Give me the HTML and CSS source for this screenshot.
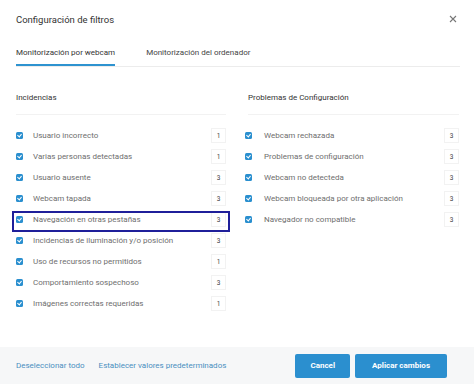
FILE: index.html
```html
<!DOCTYPE html>
<html lang="es">

<head>
    <meta charset="UTF-8">
    <title>Configuración de filtros</title>
    <link rel="stylesheet" href="styles.css">
</head>

<body>

    <div class="modal">
        <header class="modal_header">
            <h1>Configuración de filtros</h1>
            <span class="cerrar">
                <svg width="8" height="8" viewBox="0 0 8 8">
                    <path d="M1 1 L7 7 M7 1 L1 7" stroke="#777" stroke-width="1.1" fill="none" />
                </svg>
            </span>
        </header>

        <nav class="tabs">
            <button class="tab activa">Monitorización por webcam</button>
            <button class="tab">Monitorización del ordenador</button>
        </nav>

        <main class="columnas">
            <section class="columna">
                <h2>Incidencias</h2>
                <ul>
                    <li><span class="check"></span><span class="navn">Usuario incorrecto</span><span class="antal">1</span></li>
                    <li><span class="check"></span><span class="navn">Varias personas detectadas</span><span class="antal">1</span></li>
                    <li><span class="check"></span><span class="navn">Usuario ausente</span><span class="antal">3</span></li>
                    <li><span class="check"></span><span class="navn">Webcam tapada</span><span class="antal">3</span></li>
                    <li class="markeret"><span class="check"></span><span class="navn">Navegación en otras pestañas</span><span class="antal">3</span></li>
                    <li><span class="check"></span><span class="navn">Incidencias de iluminación y/o posición</span><span class="antal">3</span></li>
                    <li><span class="check"></span><span class="navn">Uso de recursos no permitidos</span><span class="antal">1</span></li>
                    <li><span class="check"></span><span class="navn">Comportamiento sospechoso</span><span class="antal">3</span></li>
                    <li><span class="check"></span><span class="navn">Imágenes correctas requeridas</span><span class="antal">1</span></li>
                </ul>
            </section>

            <section class="columna">
                <h2>Problemas de Configuración</h2>
                <ul>
                    <li><span class="check"></span><span class="navn">Webcam rechazada</span><span class="antal">3</span></li>
                    <li><span class="check"></span><span class="navn">Problemas de configuración</span><span class="antal">3</span></li>
                    <li><span class="check"></span><span class="navn">Webcam no detecteda</span><span class="antal">3</span></li>
                    <li><span class="check"></span><span class="navn">Webcam bloqueada por otra aplicación</span><span class="antal">3</span></li>
                    <li><span class="check"></span><span class="navn">Navegador no compatible</span><span class="antal">3</span></li>
                </ul>
            </section>
        </main>

        <footer class="modal_footer">
            <a href="#" class="link">Deseleccionar todo</a>
            <a href="#" class="link">Establecer valores predeterminados</a>
            <span class="spacer"></span>
            <button class="knap">Cancel</button>
            <button class="knap">Aplicar cambios</button>
        </footer>
    </div>

</body>

</html>
```

FILE: styles.css
```css
* {
    box-sizing: border-box;
}

body {
    margin: 0;
    background-color: white;
    font-family: Roboto, "Liberation Sans", sans-serif;
    color: #555;
}

.modal {
    width: 474px;
    height: 384px;
    display: flex;
    flex-direction: column;
}

.modal_header {
    display: flex;
    align-items: center;
    justify-content: space-between;
    height: 38px;
    padding-left: 16px;
    padding-right: 17px;
}

.modal_header h1 {
    margin: 0;
    font-size: 9.5px;
    font-weight: 400;
    color: #333;
}

.cerrar {
    display: flex;
}

.tabs {
    display: flex;
    gap: 31px;
    margin-left: 16px;
    margin-right: 14px;
    padding-top: 6px;
    border-bottom: 1px solid #ececec;
}

.tab {
    border: none;
    background: none;
    padding: 0 0 3px 0;
    height: 22px;
    font-family: Roboto, "Liberation Sans", sans-serif;
    font-size: 8px;
    color: #444;
    border-bottom: 2px solid transparent;
}

.tab.activa {
    color: #333;
    border-bottom: 2px solid #2e93d0;
}

/* kolonner */

.columnas {
    display: grid;
    grid-template-columns: 210px 214px;
    column-gap: 19px;
    padding-left: 16px;
    padding-right: 15px;
    flex: 1;
}

.columna h2 {
    margin: 23px 0 0 0;
    padding-bottom: 8px;
    line-height: 16px;
    font-size: 8px;
    font-weight: 400;
    color: #333;
    border-bottom: 1px solid #f2f2f2;
}

.columna:last-child h2 {
    margin-left: 3px;
}

.columna ul {
    list-style: none;
    margin: 10px 0 0 0;
    padding: 0;
}

.columna li {
    position: relative;
    display: flex;
    align-items: center;
    height: 21px;
    font-size: 8px;
    color: #6e6e6e;
}

.check {
    width: 7px;
    height: 7px;
    border-radius: 1.5px;
    background-color: #2a8fcf;
    margin-right: 10px;
    position: relative;
}

.check::after {
    content: "";
    position: absolute;
    left: 2px;
    top: 1px;
    width: 2px;
    height: 3px;
    border-right: 1px solid white;
    border-bottom: 1px solid white;
    transform: rotate(40deg);
}

.navn {
    flex: 1;
}

.antal {
    width: 15px;
    height: 15px;
    display: flex;
    align-items: center;
    justify-content: center;
    font-size: 6.5px;
    color: #444;
    border: 1px solid #f2f2f2;
}

.columna:last-child li .check {
    margin-right: 12px;
}

.markeret::after {
    content: "";
    position: absolute;
    left: -4px;
    right: -4px;
    top: 2px;
    bottom: -2px;
    border: 2px solid #1f1f9a;
}

/* footer */

.modal_footer {
    display: flex;
    align-items: center;
    gap: 14px;
    height: 37px;
    padding-left: 16px;
    padding-right: 27px;
    background-color: #f6f7f8;
}

.link {
    font-size: 8px;
    color: #4a8fbf;
    text-decoration: none;
}

.spacer {
    flex: 1;
}

.knap {
    height: 24px;
    padding: 0 15px;
    border: none;
    border-radius: 2px;
    background-color: #2b8fcf;
    color: white;
    font-family: Roboto, "Liberation Sans", sans-serif;
    font-size: 8px;
    font-weight: 700;
}

.knap + .knap {
    margin-left: -9px;
    padding: 0 17px;
}
```
